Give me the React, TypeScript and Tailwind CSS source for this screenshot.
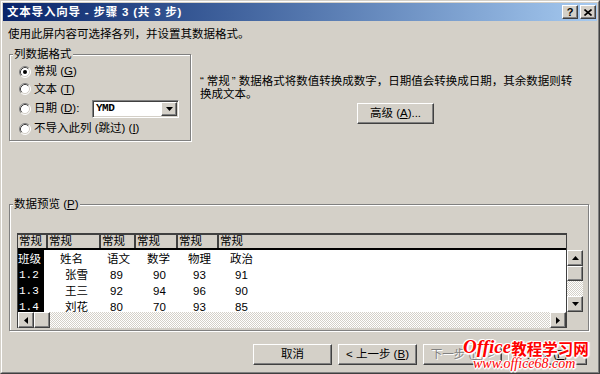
import React from "react";

const raised =
  "border border-t-white border-l-white border-r-[#404040] border-b-[#404040] shadow-[inset_-1px_-1px_0_#808080]";
const sunken =
  "border border-t-[#808080] border-l-[#808080] border-r-white border-b-white shadow-[inset_1px_1px_0_#404040,inset_-1px_-1px_0_#d4d0c8]";
const etched =
  "border border-[#808080] shadow-[inset_1px_1px_0_#ffffff,1px_1px_0_#ffffff]";
const checker =
  "bg-[image:repeating-conic-gradient(#ffffff_0%_25%,#d4d0c8_0%_50%)] bg-[length:2px_2px]";

function Radio({ checked }: { checked?: boolean }) {
  return (
    <svg width="12" height="12" viewBox="0 0 12 12" className="shrink-0">
      <circle cx="6" cy="6" r="5" fill="#ffffff" />
      <path d="M2.11 9.89 A5.5 5.5 0 0 1 9.89 2.11" stroke="#808080" fill="none" />
      <path d="M9.89 2.11 A5.5 5.5 0 0 1 2.11 9.89" stroke="#ffffff" fill="none" />
      <path d="M2.82 9.18 A4.5 4.5 0 0 1 9.18 2.82" stroke="#404040" fill="none" />
      <path d="M9.18 2.82 A4.5 4.5 0 0 1 2.82 9.18" stroke="#d4d0c8" fill="none" />
      {checked && <circle cx="6" cy="6" r="2" fill="#000000" />}
    </svg>
  );
}

function Arrow({ dir }: { dir: "up" | "down" | "left" | "right" }) {
  if (dir === "up")
    return (
      <svg width="7" height="4" viewBox="0 0 7 4">
        <polygon points="3.5,0 7,4 0,4" fill="#000" />
      </svg>
    );
  if (dir === "down")
    return (
      <svg width="7" height="4" viewBox="0 0 7 4">
        <polygon points="0,0 7,0 3.5,4" fill="#000" />
      </svg>
    );
  if (dir === "left")
    return (
      <svg width="4" height="7" viewBox="0 0 4 7">
        <polygon points="4,0 4,7 0,3.5" fill="#000" />
      </svg>
    );
  return (
    <svg width="4" height="7" viewBox="0 0 4 7">
      <polygon points="0,0 4,3.5 0,7" fill="#000" />
    </svg>
  );
}

function ScrollBtn({ dir }: { dir: "up" | "down" | "left" | "right" }) {
  return (
    <div className={`w-[16px] h-[16px] shrink-0 flex items-center justify-center bg-[#d4d0c8] ${raised}`}>
      <Arrow dir={dir} />
    </div>
  );
}

const rows = [
  ["班级", "姓名", "语文", "数学", "物理", "政治"],
  ["1.2", "张雪", "89", "90", "93", "91"],
  ["1.3", "王三", "92", "94", "96", "90"],
  ["1.4", "刘花", "80", "70", "93", "85"],
];

const cols = [
  { w: "w-[30px]", pad: ["pl-[12px]", "pl-[17px]"] },
  { w: "w-[53px]", pad: ["pl-[12px]", "pl-[17px]"] },
  { w: "w-[35px]", pad: ["pl-[6px]", "pl-[9px]"] },
  { w: "w-[42px]", pad: ["pl-[11px]", "pl-[17px]"] },
  { w: "w-[41px]", pad: ["pl-[10px]", "pl-[15px]"] },
  { w: "flex-1", pad: ["pl-[11px]", "pl-[16px]"] },
];

function Btn({ children, w, disabled }: { children: React.ReactNode; w: string; disabled?: boolean }) {
  return (
    <div
      className={`${w} h-[21px] flex items-center justify-center bg-[#d4d0c8] ${raised} ${
        disabled ? "text-[#808080] [text-shadow:1px_1px_0_#ffffff]" : "text-black"
      }`}
    >
      {children}
    </div>
  );
}

export default function App() {
  return (
    <div className="relative w-[600px] h-[374px] overflow-hidden bg-[#d4d0c8] font-['Liberation_Sans','Noto_Sans_CJK_SC',sans-serif] text-[11.5px] leading-[13px] text-black border border-t-[#d4d0c8] border-l-[#d4d0c8] border-r-[#404040] border-b-[#404040]">
      <div className="h-full flex flex-col p-px border border-t-white border-l-white border-r-[#808080] border-b-[#808080]">
        {/* Title bar */}
        <div className="h-[18px] shrink-0 flex items-center justify-between pl-[4px] pr-[1px] bg-linear-to-r from-[#0a246a] to-[#a6caf0]">
          <span className="text-white font-bold tracking-[0.8px]">文本导入向导 - 步骤 3 (共 3 步)</span>
          <div className="flex gap-[2px]">
            <div className={`w-[16px] h-[14px] flex items-center justify-center bg-[#d4d0c8] ${raised} font-bold text-[11px] leading-none`}>
              ?
            </div>
            <div className={`w-[16px] h-[14px] flex items-center justify-center bg-[#d4d0c8] ${raised}`}>
              <svg width="8" height="7" viewBox="0 0 8 7">
                <path d="M0.5 0.5 L7.5 6.5 M7.5 0.5 L0.5 6.5" stroke="#000" strokeWidth="1.6" />
              </svg>
            </div>
          </div>
        </div>

        <div className="pl-[5px] mt-[7px]">使用此屏内容可选择各列，并设置其数据格式。</div>

        {/* Top row */}
        <div className="flex mt-[7px]">
          <fieldset className={`ml-[6px] w-[182px] ${etched} pb-[2px]`}>
            <legend className="ml-[3px] px-[1px] bg-[#d4d0c8] leading-[13px]">列数据格式</legend>
            <div className="flex flex-col pt-[2px] pl-[9px]">
              <div className="h-[17px] flex items-center gap-[3px]">
                <Radio checked />
                <span>常规 (<u>G</u>)</span>
              </div>
              <div className="h-[18px] flex items-center gap-[3px]">
                <Radio />
                <span>文本 (<u>T</u>)</span>
              </div>
              <div className="h-[21px] flex items-center gap-[3px]">
                <Radio />
                <span className="w-[55px]">日期 (<u>D</u>):</span>
                <div className={`w-[87px] h-[18px] flex bg-white ${sunken} p-[1px]`}>
                  <div className="flex-1 flex items-center pl-[2px] font-['Liberation_Mono'] text-[11px] font-bold tracking-[-0.5px]">
                    YMD
                  </div>
                  <div className={`w-[16px] h-full flex items-center justify-center bg-[#d4d0c8] ${raised}`}>
                    <Arrow dir="down" />
                  </div>
                </div>
              </div>
              <div className="h-[19px] flex items-center gap-[3px]">
                <Radio />
                <span>不导入此列 (跳过) (<u>I</u>)</span>
              </div>
            </div>
          </fieldset>

          <div className="ml-[9px] pt-[27px] flex flex-col">
            <div className="whitespace-nowrap">
              <span className="mr-[3px]">“</span>常规<span className="ml-[2px] mr-[3px]">”</span>
              数据格式将数值转换成数字，日期值会转换成日期，其余数据则转
              <br />
              换成文本。
            </div>
            <div className={`mt-[2px] ml-[157px] w-[77px] h-[21px] flex items-center justify-center bg-[#d4d0c8] ${raised}`}>
              高级 (<u>A</u>)...
            </div>
          </div>
        </div>

        {/* Data preview */}
        <fieldset className={`ml-[6px] mt-[57px] w-[580px] ${etched} pb-[2px]`}>
          <legend className="ml-[3px] px-[1px] bg-[#d4d0c8] leading-[13px]">
            数据预览 (<u>P</u>)
          </legend>
          <div className="flex mt-[22px] ml-[7px]">
            <div className="w-[550px] flex flex-col border-l border-r border-t-2 border-[#404040]">
              {/* header */}
              <div className="h-[15px] flex border-b-2 border-black">
                {cols.map((c, i) => (
                  <div
                    key={i}
                    className={`${c.w} h-full pl-[1px] flex items-center ${i < 5 ? "border-r-2 border-[#404040]" : ""}`}
                  >
                    常规
                  </div>
                ))}
              </div>
              {/* body */}
              <div className="h-[62px] flex bg-white overflow-hidden">
                {cols.map((c, ci) => (
                  <div key={ci} className={`${c.w} h-full`}>
                    {ci === 0 ? (
                      <div className="w-[26px] h-full bg-black text-white pt-[1px]">
                        {rows.map((r, ri) => (
                          <div
                            key={ri}
                            className={`h-[16px] flex items-center ${
                              ri === 0 ? "" : "pl-[1px] font-['Liberation_Mono'] text-[11px]"
                            }`}
                          >
                            {r[0]}
                          </div>
                        ))}
                      </div>
                    ) : (
                      <div className="pt-[1px]">
                        {rows.map((r, ri) => (
                          <div key={ri} className={`h-[16px] flex items-center ${ri === 0 ? c.pad[0] : c.pad[1]}`}>
                            {r[ci]}
                          </div>
                        ))}
                      </div>
                    )}
                  </div>
                ))}
              </div>
              {/* horizontal scrollbar */}
              <div className="h-[16px] flex">
                <ScrollBtn dir="left" />
                <div className={`w-[16px] h-[16px] bg-[#d4d0c8] ${raised}`} />
                <div className={`flex-1 ${checker}`} />
                <ScrollBtn dir="right" />
              </div>
            </div>
            {/* vertical scrollbar */}
            <div className="w-[16px] flex flex-col pt-[17px]">
              <ScrollBtn dir="up" />
              <div className={`w-[16px] h-[15px] bg-[#d4d0c8] ${raised}`} />
              <div className={`w-[16px] h-[15px] ${checker}`} />
              <ScrollBtn dir="down" />
            </div>
          </div>
        </fieldset>

        {/* Buttons */}
        <div className="flex justify-end gap-[6px] pr-[10px] mt-[13px]">
          <Btn w="w-[79px]">取消</Btn>
          <Btn w="w-[79px]">&lt; 上一步 (<u>B</u>)</Btn>
          <Btn w="w-[79px]" disabled>
            下一步 (<u>N</u>) &gt;
          </Btn>
          <Btn w="w-[79px]">完成 (<u>F</u>)</Btn>
        </div>
      </div>

      {/* Watermark */}
      <div className="absolute left-[462px] top-[336px] pointer-events-none leading-none text-[#ff0000] [text-shadow:1px_0_0_#fff,-1px_0_0_#fff,0_1px_0_#fff,0_-1px_0_#fff,1px_1px_0_#fff,-1px_-1px_0_#fff,2px_0_1px_#fff,0_2px_1px_#fff]">
        <div className="flex items-end">
          <span className="font-['Liberation_Serif'] italic font-bold text-[19px]">Office</span>
          <span className="font-['Noto_Sans_CJK_SC'] font-bold text-[15.5px]">教程学习网</span>
        </div>
        <div className="font-['Liberation_Serif'] italic text-[14px] ml-[10px] mt-[1px]">www.office68.com</div>
      </div>
    </div>
  );
}
